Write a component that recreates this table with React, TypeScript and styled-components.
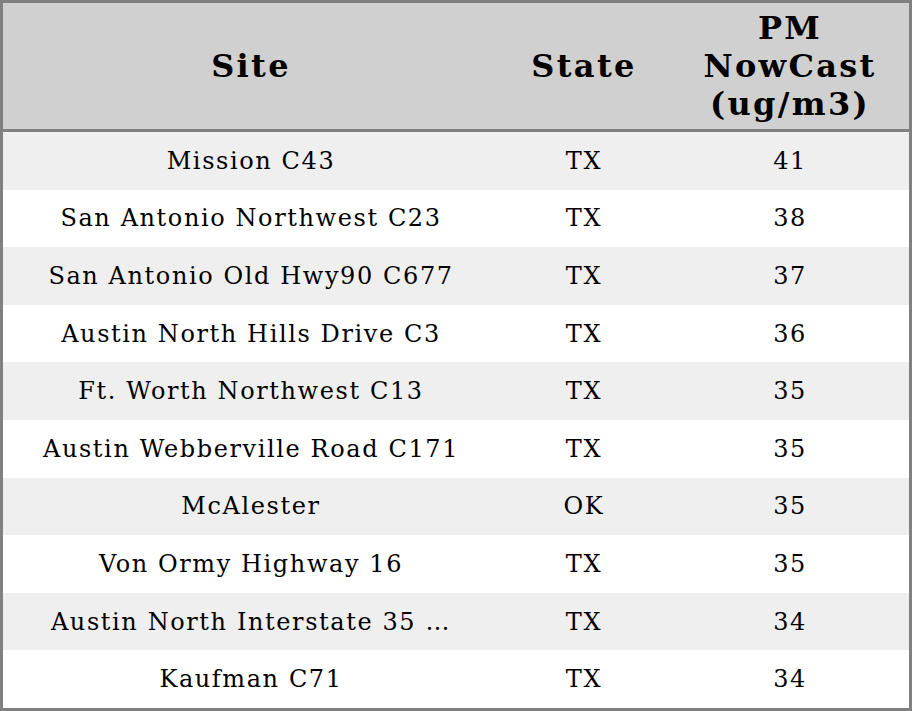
import React from 'react';
import styled, {createGlobalStyle} from 'styled-components';

interface site {
  name: string,
  state: string,
  pm: number,
}

const sites: site[] = [
  {name: 'Mission C43', state: 'TX', pm: 41},
  {name: 'San Antonio Northwest C23', state: 'TX', pm: 38},
  {name: 'San Antonio Old Hwy90 C677', state: 'TX', pm: 37},
  {name: 'Austin North Hills Drive C3', state: 'TX', pm: 36},
  {name: 'Ft. Worth Northwest C13', state: 'TX', pm: 35},
  {name: 'Austin Webberville Road C171', state: 'TX', pm: 35},
  {name: 'McAlester', state: 'OK', pm: 35},
  {name: 'Von Ormy Highway 16', state: 'TX', pm: 35},
  {name: 'Austin North Interstate 35 …', state: 'TX', pm: 34},
  {name: 'Kaufman C71', state: 'TX', pm: 34},
];

const App: React.FC = () => {
  return (
    <>
      <GlobalStyle/>
      <Table>
        <colgroup>
          <col style={{width: '494px'}}/>
          <col style={{width: '172px'}}/>
          <col style={{width: '240px'}}/>
        </colgroup>
        <thead>
          <HeadRow>
            <HeadCell>Site</HeadCell>
            <HeadCell>State</HeadCell>
            <HeadCell>PM NowCast (ug/m3)</HeadCell>
          </HeadRow>
        </thead>
        <tbody>
          {sites.map((s: site, id: number) => {
            return (
              <Row key={id} $odd={id % 2 === 0}>
                <Cell>{s.name}</Cell>
                <Cell>{s.state}</Cell>
                <Cell>{s.pm}</Cell>
              </Row>
            )
          })}
        </tbody>
      </Table>
    </>
  )
};

export default App;


const GlobalStyle = createGlobalStyle`
  html, body {
    margin: 0;
    padding: 0;
    background: #ffffff;
    overflow: hidden;
  }
`;
const Table = styled.table`
  width: 912px;
  height: 711px;
  border-collapse: separate;
  border-spacing: 0;
  table-layout: fixed;
  border: 3px solid #808080;
  font-family: "DejaVu Serif", serif;
  color: #000000;
`;
const HeadRow = styled.tr`
  background: #d0d0d0;
`;
const HeadCell = styled.th`
  height: 112px;
  padding: 6px 30px 6px 32px;
  font-size: 32px;
  font-weight: bold;
  letter-spacing: 2.3px;
  text-align: center;
  border-bottom: 3px solid #808080;
`;
const Row = styled.tr<{$odd: boolean}>`
  background: ${({$odd}) => $odd ? '#efefef' : '#ffffff'};
  height: 57.6px;
`;
const Cell = styled.td`
  padding: 0 0 0 2px;
  font-size: 24px;
  letter-spacing: 1.6px;
  text-align: center;
  white-space: nowrap;
`;
